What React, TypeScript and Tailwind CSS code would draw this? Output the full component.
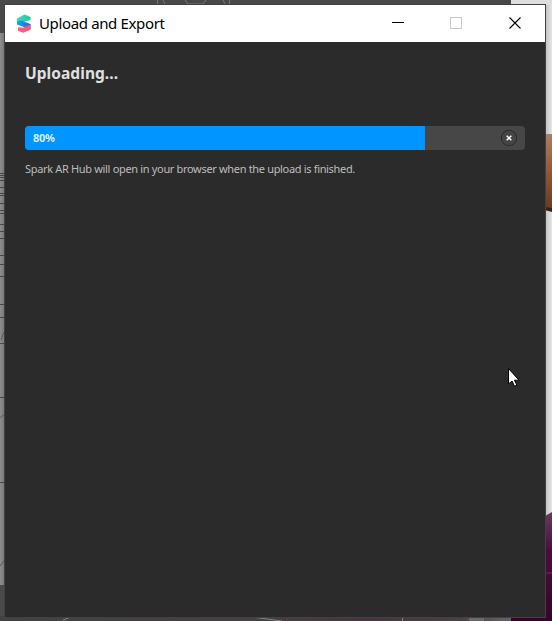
const leftLines = [173, 175, 177, 180, 187, 193, 195, 203, 210, 213, 224, 231, 238, 255, 264, 276, 304, 317, 343, 397, 482];

function Desktop() {
  return (
    <svg className="absolute inset-0" width="552" height="621" viewBox="0 0 552 621" shapeRendering="auto">
      <defs>
        <linearGradient id="side" x1="0" x2="1" y1="0" y2="0">
          <stop offset="0" stopColor="#8e8e8e" />
          <stop offset="1" stopColor="#747474" />
        </linearGradient>
        <linearGradient id="paper" x1="0" x2="1" y1="0" y2="0">
          <stop offset="0" stopColor="#bfbfbf" />
          <stop offset="1" stopColor="#e6e6e6" />
        </linearGradient>
        <linearGradient id="skin" x1="0" x2="0" y1="0" y2="1">
          <stop offset="0" stopColor="#b07c5f" />
          <stop offset="0.5" stopColor="#935635" />
          <stop offset="1" stopColor="#68391f" />
        </linearGradient>
        <linearGradient id="plum" x1="0" x2="0" y1="0" y2="1">
          <stop offset="0" stopColor="#6b3763" />
          <stop offset="0.35" stopColor="#4c0d3e" />
          <stop offset="1" stopColor="#3a022b" />
        </linearGradient>
        <linearGradient id="base" x1="0" x2="1" y1="0" y2="0">
          <stop offset="0" stopColor="#434343" />
          <stop offset="0.5" stopColor="#444142" />
          <stop offset="0.72" stopColor="#49333c" />
          <stop offset="0.9" stopColor="#494043" />
          <stop offset="1" stopColor="#656565" />
        </linearGradient>
      </defs>
      <rect width="511" height="34" fill="#484848" />
      <rect y="33" width="5" height="552" fill="url(#side)" />
      <rect y="585" width="5" height="36" fill="#4a4a4a" />
      <rect y="616" width="511" height="5" fill="url(#base)" />
      <rect x="511" width="41" height="5" fill="#dedede" />
      <rect x="545" y="5" width="7" height="616" fill="url(#paper)" />
      <path d="M545 134h7v77l-7-1z" fill="url(#skin)" />
      <path d="M545 207l7 1v4l-7-2z" fill="#3a2013" />
      <path d="M545 516l7-4v109h-7z" fill="url(#plum)" />
      <path d="M511 616h41v5h-41z" fill="#380429" />
      <path d="M545 573h7" stroke="#64345b" />
      {leftLines.map((y) => <path key={y} d={`M0 ${y + 0.5}h5`} stroke="#484848" />)}
      <path d="M0 418l5-4M1 340l3-8M0 566l4-5" stroke="#5b5b5b" fill="none" />
      <path d="M157.5 0v4M163 0l2 4M185 0l3 4h15l3-4M223 0l2 4M229.5 0v4" stroke="#757575" fill="none" />
      <path d="M63 620l8-3M252 617l30 4M402.500 617v4" stroke="#858585" fill="none" />
      <path d="M468 617h16v4h-14z" fill="#6b6b6b" />
    </svg>
  );
}

function SparkLogo() {
  return (
    <svg width="18" height="20" viewBox="0 0 18 20">
      <defs>
        <linearGradient id="mint" x1="0" x2="1"><stop stopColor="#35dfbd" /><stop offset="1" stopColor="#24c6a4" /></linearGradient>
        <linearGradient id="blue" x1="0" x2="1"><stop stopColor="#16a8e8" /><stop offset="1" stopColor="#2962cf" /></linearGradient>
      </defs>
      <path d="M2 4.500L9.500 .5l6 2.500v3L10 7.500 5.500 11 2 9z" fill="url(#mint)" />
      <path d="M2 7.500l4-1 9.500 3.500v5L10 13.500 2 10.500z" fill="url(#blue)" />
      <path d="M15.500 10.500v5.300L8.300 18.800 3 16.700v-3.400l5 .5z" fill="#fb5b7e" />
    </svg>
  );
}

function TitleBar() {
  return (
    <header className="flex h-[37px] items-center bg-white text-black">
      <div className="ml-[10px] flex h-5 w-[18px]"><SparkLogo /></div>
      <h1 className="ml-[6px] flex-1 whitespace-nowrap pb-[2px] text-[15px] font-normal leading-5 tracking-[-0.36px]">Upload and Export</h1>
      <div className="flex h-full w-[176px]" aria-label="Window controls">
        <svg width="176" height="37" viewBox="0 0 176 37" fill="none" shapeRendering="crispEdges">
          <path d="M23 17.500h12" stroke="#000" />
          <rect x="81.500" y="12.500" width="11" height="11" stroke="#cbcbcb" />
          <path d="M140.500 12.500l11 11M151.500 12.500l-11 11" stroke="#000" shapeRendering="auto" strokeWidth="1.100" />
        </svg>
      </div>
    </header>
  );
}

export default function App() {
  return (
    <div className="relative h-[621px] w-[552px] overflow-hidden bg-[#d7d7d7] pl-[4px] pt-[4px] font-['Noto_Sans',sans-serif]">
      <Desktop />
      <main className="relative h-[614px] w-[542px] border border-[#414141] bg-[#2b2b2b]">
        <TitleBar />
        <section className="flex flex-col px-5">
          <h2 className="mt-[19px] whitespace-nowrap text-[15.5px] font-bold leading-6 tracking-[0.05px] text-[#e0e0e0]">Uploading...</h2>
          <div className="mt-[41px] flex h-6 overflow-hidden rounded bg-[#474747]">
            <div className="flex w-4/5 items-center bg-[#0095ff] pl-2 text-[11px] font-bold tracking-[-0.3px] text-[#d9edff]">80%</div>
            <div className="flex flex-1 items-center justify-end pr-[7px]">
              <svg width="18" height="18" viewBox="0 0 18 18" fill="none">
                <circle cx="9" cy="9" r="7.700" fill="#454545" stroke="#2b2b2b" />
                <path d="M6.700 6.700l4.600 4.600M11.300 6.700l-4.600 4.600" stroke="#fff" strokeWidth="1.500" />
              </svg>
            </div>
          </div>
          <p className="mt-[11px] whitespace-nowrap text-[11px] leading-4 tracking-[-0.33px] text-[#bdbdbd]">Spark AR Hub will open in your browser when the upload is finished.</p>
        </section>
      </main>
      <svg className="absolute left-[507px] top-[367px]" width="14" height="21" viewBox="0 0 14 21">
        <path d="M1.500 1.500v15.500l3.500-3 2.500 5.200 2.400-1.100-2.400-4.900h4.500z" fill="#fff" stroke="#000" />
      </svg>
    </div>
  );
}
